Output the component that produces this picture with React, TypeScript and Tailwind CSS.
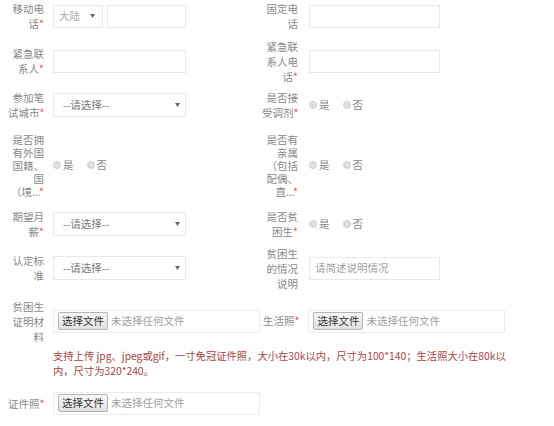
import React from "react";

const Star = () => <span className="text-[#e2574c]">*</span>;

const Label = ({
  lines,
  star,
  leading = "leading-[15px]",
  right,
}: {
  lines: string[];
  star?: boolean;
  leading?: string;
  right?: boolean;
}) => (
  <div
    className={`w-[36px] shrink-0 text-right text-[10.5px] text-[#888] ${leading} ${
      right ? "mr-[11px]" : "mr-[9px]"
    }`}
  >
    {lines.map((l, i) => (
      <div key={i} className="whitespace-nowrap">
        {l}
        {star && i === lines.length - 1 ? <Star /> : null}
      </div>
    ))}
  </div>
);

const Arrow = () => (
  <svg width="5" height="4" viewBox="0 0 5 4" className="shrink-0">
    <path d="M0 0 L5 0 L2.5 4 Z" fill="#666" />
  </svg>
);

const Input = ({ w = "w-[133px]", placeholder }: { w?: string; placeholder?: string }) => (
  <div
    className={`${w} flex h-[23px] items-center border border-[#e8e8e8] bg-white px-[5px] text-[10.5px] text-[#a0a0a0]`}
  >
    {placeholder}
  </div>
);

const Select = () => (
  <div className="flex h-[24px] w-[133px] items-center justify-between border border-[#e8e8e8] bg-white pl-[9px] pr-[5px] text-[10.5px] text-[#777]">
    <span>--请选择--</span>
    <Arrow />
  </div>
);

const Radio = ({ label }: { label: string }) => (
  <div className="flex items-center text-[10.5px] text-[#888]">
    <span className="mr-[2px] inline-block h-[8px] w-[8px] rounded-full border border-[#d0d0d0] bg-[#e0e0e0]" />
    <span>{label}</span>
  </div>
);

const Radios = () => (
  <div className="flex items-center gap-[13px]">
    <Radio label="是" />
    <Radio label="否" />
  </div>
);

const FileBox = ({ w }: { w: string }) => (
  <div className={`${w} flex h-[23px] items-center border border-[#ececec] bg-white pl-[4px]`}>
    <div className="flex h-[18px] items-center rounded-[2px] border border-[#b4b4b4] bg-gradient-to-b from-[#f6f6f6] to-[#e2e2e2] px-[3px] text-[10.5px] text-[#333]">
      选择文件
    </div>
    <span className="ml-[3px] whitespace-nowrap text-[10.5px] text-[#a0a0a0]">未选择任何文件</span>
  </div>
);

export default function App() {
  return (
    <div className="h-[426px] w-[554px] overflow-hidden bg-white pl-[8px] font-['Noto_Sans_CJK_SC',sans-serif] text-[10.5px]">
      {/* row 1 */}
      <div className="flex h-[32px] items-center">
        <div className="flex w-[254px] items-center">
          <Label lines={["移动电", "话"]} star />
          <div className="flex h-[23px] w-[50px] items-center justify-between border border-[#e8e8e8] pl-[5px] pr-[7px] text-[#aaa]">
            <span>大陆</span>
            <Arrow />
          </div>
          <div className="ml-[4px]">
            <Input w="w-[79px]" />
          </div>
        </div>
        <div className="flex items-center">
          <Label lines={["固定电", "话"]} right />
          <Input w="w-[131px]" />
        </div>
      </div>

      {/* row 2 */}
      <div className="flex h-[58px] items-center">
        <div className="flex w-[254px] items-center">
          <Label lines={["紧急联", "系人"]} star />
          <Input />
        </div>
        <div className="flex items-center">
          <Label lines={["紧急联", "系人电", "话"]} star right />
          <Input w="w-[131px]" />
        </div>
      </div>

      {/* row 3 */}
      <div className="flex h-[30px] items-center">
        <div className="flex w-[254px] items-center">
          <Label lines={["参加笔", "试城市"]} star />
          <Select />
        </div>
        <div className="flex items-center">
          <Label lines={["是否接", "受调剂"]} star right />
          <Radios />
        </div>
      </div>

      {/* row 4 */}
      <div className="flex h-[90px] items-center">
        <div className="flex w-[254px] items-center">
          <Label lines={["是否拥", "有外国", "国籍、", "国", "（境..."]} star leading="leading-[13px]" />
          <Radios />
        </div>
        <div className="flex items-center">
          <Label lines={["是否有", "亲属", "（包括", "配偶、", "直..."]} star leading="leading-[13px]" right />
          <Radios />
        </div>
      </div>

      {/* row 5 */}
      <div className="flex h-[28px] items-center">
        <div className="flex w-[254px] items-center">
          <Label lines={["期望月", "薪"]} star />
          <Select />
        </div>
        <div className="flex items-center">
          <Label lines={["是否贫", "困生"]} star right />
          <Radios />
        </div>
      </div>

      {/* row 6 */}
      <div className="flex h-[60px] items-center">
        <div className="flex w-[254px] items-center">
          <Label lines={["认定标", "准"]} />
          <Select />
        </div>
        <div className="flex items-center">
          <Label lines={["贫困生", "的情况", "说明"]} right />
          <Input w="w-[131px]" placeholder="请简述说明情况" />
        </div>
      </div>

      {/* row 7 */}
      <div className="flex h-[46px] items-center">
        <Label lines={["贫困生", "证明材", "料"]} />
        <FileBox w="w-[207px]" />
        <div className="ml-[3px] mr-[9px] whitespace-nowrap text-[#888]">
          生活照
          <Star />
        </div>
        <FileBox w="w-[197px]" />
      </div>

      {/* row 8 */}
      <div className="ml-[45px] pt-[4px] text-[10.3px] leading-[15px] text-[#a94442]">
        <div className="whitespace-nowrap">
          支持上传 jpg、jpeg或gif，一寸免冠证件照，大小在30k以内，尺寸为100*140；生活照大小在80k以
        </div>
        <div className="whitespace-nowrap">内，尺寸为320*240。</div>
      </div>

      {/* row 9 */}
      <div className="mt-[10px] flex h-[30px] items-center">
        <Label lines={["证件照"]} star />
        <FileBox w="w-[207px]" />
      </div>
    </div>
  );
}
